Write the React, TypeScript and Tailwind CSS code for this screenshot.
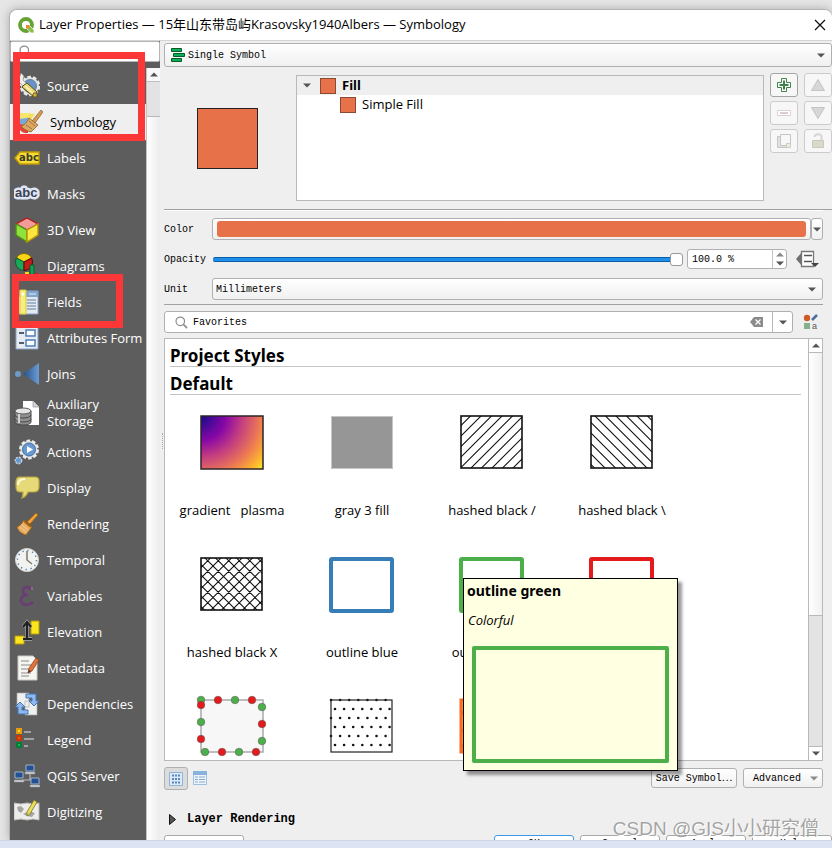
import React from "react";
import type { ReactNode } from "react";

const MONO = "font-['Liberation_Mono','Noto_Sans_CJK_SC',monospace]";
const BOLD = "font-['Noto_Sans',sans-serif] font-bold";
const BTN = "rounded-[3px] border border-[#b0b0b0] bg-linear-to-b from-white to-[#f0f0f0]";

/* ---------- small glyphs ---------- */

function Arrow({ up = false, pale = false }: { up?: boolean; pale?: boolean }) {
  return (
    <svg width="8" height="5" viewBox="0 0 8 5" aria-hidden="true">
      <path d={up ? "M0 4.5h8L4 .5z" : "M0 .5h8L4 4.5z"} fill={pale ? "#8a8a8a" : "#555"} />
    </svg>
  );
}

function Magnifier() {
  return (
    <svg width="13" height="13" viewBox="0 0 14 14" fill="none" stroke="#8c8c8c" strokeWidth="1.3" aria-hidden="true">
      <circle cx="5.7" cy="5.7" r="4.6" />
      <path d="M9 9l4 4" strokeWidth="1.8" />
    </svg>
  );
}

function Icon({ children }: { children: ReactNode }) {
  return (
    <svg width="26" height="26" viewBox="0 0 26 26" className="shrink-0" aria-hidden="true">
      {children}
    </svg>
  );
}

const iconSource = (
  <Icon>
    <circle cx="16" cy="13" r="9" fill="#dcdcd8" stroke="#e9e9e6" strokeWidth="2.500" strokeDasharray="3.500 2.150" />
    <circle cx="16" cy="13" r="6.500" fill="#6a93c4" stroke="#4d759f" strokeWidth=".8" />
    <path d="M3 2l3 1 1-3 3 3-1 4 7 7-3 3-7-7-4-1-2-4 3 1z" fill="#ecece8" stroke="#888" strokeWidth=".7" />
    <path d="M10 12l3-2 10 9-3 5-12-10z" fill="#e9d77b" stroke="#5e4d13" />
    <path d="M11 13l9 8" stroke="#fff4b5" strokeWidth="1.600" />
    <circle cx="21" cy="22" r="2.200" fill="#d4b343" stroke="#5e4d13" strokeWidth=".9" />
  </Icon>
);
const iconSymbology = (
  <Icon>
    <path d="M3 10c1-4 6-6 15-5l-6 8-9 2z" fill="#f5de5a" />
    <path d="M2 9l8-2 3 7-10 3z" fill="#78a7dc" />
    <path d="M3 4l11 0-4 5-8 1z" fill="#f8e66c" />
    <path d="M1 15l10 1v8c-5 1-10-3-10-9z" fill="#e8413c" />
    <path d="M24 1l2 2-8 11-3-2z" fill="#d69a50" stroke="#8d5e26" strokeWidth=".7" />
    <path d="M12 9l9 7-7 7c-4-1-8-3-10-6 3 0 6-4 8-8z" fill="#dba964" stroke="#8d5e26" strokeWidth=".8" />
    <path d="M9 16l6 4M12 12l6 5" stroke="#8d5e26" strokeWidth=".7" />
  </Icon>
);
const iconLabels = (
  <Icon>
    <path d="M1 13l5-6h19v12H6z" fill="#f7dc33" stroke="#c09a08" strokeWidth="1.400" />
    <text x="5" y="16" fontSize="10" fontWeight="700" fontFamily="DejaVu Sans, sans-serif" fill="#3a3a2a">abc</text>
  </Icon>
);
const iconMasks = (
  <Icon>
    <text x="1" y="16" fontSize="13" fontWeight="700" fontFamily="Liberation Sans, sans-serif" fill="#3b4250" stroke="#dfe6f7" strokeWidth="5" strokeLinejoin="round" paintOrder="stroke">abc</text>
  </Icon>
);
const icon3d = (
  <Icon>
    <path d="M13 1l11 6-11 6L2 7z" fill="#f19b9b" stroke="#b71818" strokeWidth="1.400" />
    <path d="M2 7l11 6v12L2 18z" fill="#8fe23e" stroke="#4c8f12" strokeWidth="1.400" />
    <path d="M24 7l-11 6v12l11-7z" fill="#fbe63f" stroke="#b39508" strokeWidth="1.400" />
  </Icon>
);
const iconDiagrams = (
  <Icon>
    <path d="M10 9L2.500 5A8.500 8.500 0 0 1 17.500 5z" fill="#fbd414" stroke="#8c6b00" />
    <path d="M10 9L2.500 5A8.500 8.500 0 0 0 10 17.500z" fill="#1aa85a" stroke="#065f2c" />
    <path d="M10 9l7.500-4A8.500 8.500 0 0 1 10 17.500z" fill="#c51b1b" stroke="#560606" />
    <path d="M16 12h4v14h-4z" fill="#11a352" stroke="#065f2c" />
    <path d="M11 19h4v7h-4z" fill="#fbd414" /><path d="M21 20h3v6h-3z" fill="#c51b1b" />
  </Icon>
);
const iconFields = (
  <Icon>
    <path d="M3 2h21v23H3z" fill="#e6e9ed" stroke="#87a6cb" />
    <path d="M3 2h21v6H3z" fill="#7fa5d2" /><path d="M15 5h7" stroke="#e6eefa" />
    <path d="M13 11h9M13 14h9M13 17h9M13 20h9" stroke="#5c80aa" strokeWidth="1.200" />
    <path d="M6 1h6v24H6z" fill="#f5ee83" stroke="#d9c92b" /><circle cx="9" cy="5" r="1.500" fill="#fff" />
  </Icon>
);
const iconForm = (
  <Icon>
    <path d="M2 2h22v22H2z" fill="#e8ecf2" stroke="#86a5c8" />
    <path d="M12 5h9v6h-9zM12 15h9v6h-9z" fill="#fff" stroke="#4e7db5" strokeWidth="1.500" />
    <path d="M5 8h5M5 18h5" stroke="#555d68" strokeWidth="1.800" />
  </Icon>
);
const iconJoins = (
  <Icon>
    <defs><linearGradient id="join"><stop offset="0" stopColor="#234f84" /><stop offset="1" stopColor="#6d9cd5" /></linearGradient></defs>
    <circle cx="4" cy="13" r="3" fill="#6d9ac8" /><path d="M9 13L25 2v22z" fill="url(#join)" />
  </Icon>
);
const iconStorage = (
  <Icon>
    <path d="M9 1h10l6 6v18H9z" fill="#fff" /><path d="M19 1v6h6" fill="#d4d4d4" stroke="#999" strokeWidth=".7" />
    <path d="M1 11v11c0 4 16 4 16 0V11z" fill="#8f8f8f" stroke="#4a4a4a" />
    <ellipse cx="9" cy="11" rx="8" ry="3" fill="#e5e5e5" stroke="#5a5a5a" />
    <path d="M1 15c0 4 16 4 16 0M1 19c0 4 16 4 16 0" fill="none" stroke="#4a4a4a" />
    <path d="M5 14v9" stroke="#d4d4d4" strokeWidth="2" />
  </Icon>
);
const iconActions = (
  <Icon>
    <circle cx="15" cy="10.500" r="8.500" fill="#dedfe0" stroke="#e9eaea" strokeWidth="3" strokeDasharray="3.500 1.840" />
    <circle cx="15" cy="10.500" r="6.500" fill="#6899d2" stroke="#406c9f" />
    <path d="M13 7l6 3.500-6 3.500z" fill="#fff" />
    <circle cx="4.500" cy="21.500" r="3.200" fill="#6899d2" stroke="#c9d4e1" strokeWidth="1.400" strokeDasharray="2 1" />
  </Icon>
);
const iconDisplay = (
  <Icon>
    <path d="M6 2h15c3 0 4 2 4 4v6c0 4-2 5-5 5h-6c-1 3-3 5-6 6 1-2 1-4 1-6H6c-3 0-4-2-4-5V7c0-3 1-5 4-5z" fill="#e5da77" stroke="#b9a642" strokeWidth="1.200" />
    <path d="M4 10c0-4 2-6 7-6" fill="none" stroke="#fffbe0" strokeWidth="2" />
  </Icon>
);
const iconRendering = (
  <Icon>
    <path d="M22 2l2 2-8 9-3-2z" fill="#f0a13a" stroke="#a15f10" strokeWidth=".8" />
    <path d="M10 9l8 7-6 8C8 23 4 20 3 16c3-1 5-4 7-7z" fill="#e6ad65" stroke="#a15f10" strokeWidth=".9" />
    <path d="M10 10l7 6" stroke="#a15f10" strokeWidth="2" /><path d="M6 16l6 5M8 14l6 5" stroke="#fbd6a0" strokeWidth=".8" />
  </Icon>
);
const iconTemporal = (
  <Icon>
    <circle cx="13" cy="13" r="11.500" fill="#f2f2ee" stroke="#d4d4d0" />
    <circle cx="13" cy="13" r="9.500" fill="none" stroke="#4b81c0" strokeWidth="1.500" strokeDasharray="1.300 3.674" />
    <path d="M13 4v9l5 4" fill="none" stroke="#777" strokeWidth="1.500" />
  </Icon>
);
const iconVariables = (
  <Icon>
    <path d="M18 7c-2-4-9-4-9 1 0 3 2 4 5 4-4 0-7 2-7 5 0 6 8 6 12 2" fill="none" stroke="#6a3d75" strokeWidth="2.600" />
    <path d="M18 4v3" stroke="#8e6699" strokeWidth="2" />
  </Icon>
);
const iconElevation = (
  <Icon>
    <path d="M17 2h8v13h-8z" fill="#fbe51f" stroke="#b79c07" /><path d="M1 17h9v8H1z" fill="#fbe51f" stroke="#b79c07" />
    <path d="M9 20h9M13 4v15M9 8l4-5 4 5" fill="none" stroke="#a8a8a8" strokeWidth="3.500" />
    <path d="M9 20h9M13 4v15M9 8l4-5 4 5" fill="none" stroke="#222" strokeWidth="2.200" />
  </Icon>
);
const iconMetadata = (
  <Icon>
    <path d="M4 1h15l4 4v20H4z" fill="#f5f5f2" stroke="#c9c9c5" />
    <path d="M7 6h8M7 10h10M7 14h8M7 18h10M7 21h8" stroke="#8a8a8a" strokeWidth="1.200" />
    <path d="M22 3l3 2-7 11-4 2 1-5z" fill="#df7139" stroke="#8d3a12" strokeWidth=".7" /><path d="M14 18l1-3 2 1z" fill="#333" />
  </Icon>
);
const iconDependencies = (
  <Icon>
    <path d="M3 2h12v14H3zM11 10h12v14H11z" fill="#f0f0ee" stroke="#aaa" strokeWidth=".7" />
    <path d="M12 3h10v7h3l-5 5-5-5h3V7h-6z" fill="#8fb9ee" stroke="#4376b9" />
    <path d="M14 23H4v-7H1l5-5 5 5H8v3h6z" fill="#8fb9ee" stroke="#4376b9" />
  </Icon>
);
const iconLegend = (
  <Icon>
    <path d="M3 2h4v4H3z" fill="#fbdc22" stroke="#e39b0b" strokeWidth="2" />
    <path d="M3 9h4v4H3z" fill="#f2531d" stroke="#c53a09" strokeWidth="2" />
    <path d="M3 16h4v4H3z" fill="#15ba5b" stroke="#087c37" strokeWidth="2" />
    <path d="M10 5h7M10 12h10M10 19h4" stroke="#a2a2a2" strokeWidth="2" />
  </Icon>
);
const iconServer = (
  <Icon>
    <path d="M16 11v6M8 17h12" fill="none" stroke="#bbb" strokeWidth="1.200" />
    <g fill="#234f93" stroke="#a0b4ca"><path d="M12 2h8v6h-8zM1 9h8v6H1zM17 15h8v6h-8z" /></g>
    <g fill="#d9dbde" stroke="#858b92" strokeWidth=".6"><path d="M11 9h10v2H11zM0 17h10v2H0zM16 22h10v2H16z" /></g>
  </Icon>
);
const iconDigitizing = (
  <Icon>
    <path d="M0 4l7 1 6-1 6 1 6-1v17l-6-1-6 1-6-1-7 1z" fill="#ededeb" stroke="#bdbdbd" />
    <path d="M3 8l4-1 3 3-3 4-3-2zM9 15l6-3 6 2-3 4-5-1zM4 16l3 2" fill="#a5a5a3" />
    <path d="M20 1l3 2-7 12-3 2v-4z" fill="#eadf58" stroke="#79702a" strokeWidth=".8" />
  </Icon>
);

const NAV: { label: string; icon: ReactNode; active?: boolean; tall?: boolean }[] = [
  { label: "Source", icon: iconSource },
  { label: "Symbology", icon: iconSymbology, active: true },
  { label: "Labels", icon: iconLabels },
  { label: "Masks", icon: iconMasks },
  { label: "3D View", icon: icon3d },
  { label: "Diagrams", icon: iconDiagrams },
  { label: "Fields", icon: iconFields },
  { label: "Attributes Form", icon: iconForm },
  { label: "Joins", icon: iconJoins },
  { label: "Auxiliary Storage", icon: iconStorage, tall: true },
  { label: "Actions", icon: iconActions },
  { label: "Display", icon: iconDisplay },
  { label: "Rendering", icon: iconRendering },
  { label: "Temporal", icon: iconTemporal },
  { label: "Variables", icon: iconVariables },
  { label: "Elevation", icon: iconElevation },
  { label: "Metadata", icon: iconMetadata },
  { label: "Dependencies", icon: iconDependencies },
  { label: "Legend", icon: iconLegend },
  { label: "QGIS Server", icon: iconServer },
  { label: "Digitizing", icon: iconDigitizing },
];

function Sidebar() {
  return (
    <aside className="flex w-[150px] shrink-0 flex-col bg-[#5d5d5d]">
      <label className="flex h-[21px] shrink-0 items-start rounded-[2px] border border-[#b5b5b5] bg-white pt-[3px] pl-2">
        <Magnifier />
        <input aria-label="Search settings" className="ml-1 h-3 w-24 bg-transparent text-[12px] outline-none" />
      </label>
      <div className="mt-[6px] flex min-h-0 flex-1">
        <nav className="min-w-0 flex-1 overflow-hidden border-r border-[#c4c4c4]">
          {NAV.map((n) => (
            <button
              key={n.label}
              className={`flex w-full items-center gap-[7px] text-left text-[13px] leading-[17px] ${n.tall ? "h-[42px]" : "h-9"} ${
                n.active ? "bg-[#efefef] pl-[7px] text-black" : "pl-1 text-white"
              }`}
            >
              {n.icon}
              <span className={n.tall ? "w-16" : "whitespace-nowrap"}>{n.label}</span>
            </button>
          ))}
        </nav>
        <div className="flex w-[13px] flex-col bg-linear-to-r from-white to-[#ececec]">
          <button aria-label="Scroll up" className="flex h-[14px] items-center justify-center border-b border-[#c0c0c0] bg-[#f8f8f8]">
            <Arrow up />
          </button>
          <div className="h-[35px] border-b border-[#b8b8b8] bg-[#e3e3e3]" />
        </div>
      </div>
    </aside>
  );
}

/* ---------- symbol layer tree ---------- */

function ToolButton({ label, enabled, children }: { label: string; enabled?: boolean; children: ReactNode }) {
  return (
    <button
      aria-label={label}
      className={`flex h-6 w-7 items-center justify-center rounded-[3px] border bg-[#f7f7f7] ${enabled ? "border-[#a5a5a5]" : "border-[#cccccc]"}`}
    >
      <svg width="16" height="16" viewBox="0 0 16 16" aria-hidden="true">{children}</svg>
    </button>
  );
}

function SymbolSection() {
  return (
    <section className="flex h-[143px] shrink-0 border-b border-[#a0a0a0] pt-[6px]">
      <div className="flex w-[132px] shrink-0 items-center justify-center pr-[6px] pb-[5px]">
        <div className="size-[61px] border border-[#232323] bg-[#e77148]" />
      </div>
      <div className="mt-[2px] mb-2 min-w-0 flex-1 border border-[#b9b9b9] bg-white text-[13px] leading-[19px]">
        <div className="flex h-[19px] items-center bg-[#efefef] pl-[6px]">
          <Arrow />
          <span className="mr-[6px] ml-[9px] size-4 border border-[#8c4a33] bg-[#e77148]" />
          <b className={BOLD}>Fill</b>
        </div>
        <div className="flex h-[19px] items-center pl-[43px]">
          <span className="mr-[6px] size-4 border border-[#8c4a33] bg-[#e77148]" />
          Simple Fill
        </div>
      </div>
      <div className="ml-[6px] grid shrink-0 auto-rows-min grid-cols-2 gap-x-[6px] gap-y-1">
        <ToolButton label="Add symbol layer" enabled>
          <path d="M5.500 1.500h5v4h4v5h-4v4h-5v-4h-4v-5h4z" fill="#fff" stroke="#3d8447" />
          <path d="M8 3.500v9M3.500 8h9" stroke="#3d8447" strokeWidth="2" />
        </ToolButton>
        <ToolButton label="Move up"><path d="M8 2.500l6.500 11h-13z" fill="#d5d7d9" stroke="#c2c4c7" /></ToolButton>
        <ToolButton label="Remove symbol layer">
          <path d="M1.500 5.500h13v5h-13z" fill="#fff" stroke="#dfd1d1" /><path d="M4 8h8" stroke="#e3cccc" strokeWidth="2" />
        </ToolButton>
        <ToolButton label="Move down"><path d="M8 13.500l6.500-11h-13z" fill="#d5d7d9" stroke="#c2c4c7" /></ToolButton>
        <ToolButton label="Duplicate symbol layer">
          <path d="M1.500 3.500h9v11h-9z" fill="#e2e2e2" stroke="#c6c6c6" /><path d="M4.500 1.500h10v11h-10z" fill="#f7f7f7" stroke="#c6c6c6" />
          <path d="M10.500 10.500h4v4h-4z" fill="#eeece0" stroke="#ceccbe" />
        </ToolButton>
        <ToolButton label="Lock symbol colour">
          <path d="M4.500 4C5 0 12 .5 11.500 4v4" fill="none" stroke="#d6d6d6" strokeWidth="2" />
          <path d="M2.500 7.500h11v7h-11z" fill="#dad9cb" stroke="#c9c8ba" />
        </ToolButton>
      </div>
    </section>
  );
}

function FormSection() {
  return (
    <section className={`mr-[9px] shrink-0 border-t border-b border-t-white border-b-[#a0a0a0] pt-[7px] pb-1 text-[10px] ${MONO}`}>
      <div className="flex h-[22px] items-center">
        <label htmlFor="color" className="w-12 shrink-0">Color</label>
        <button id="color" className={`flex h-[22px] min-w-0 flex-1 px-1 py-[2px] ${BTN}`}>
          <span className="h-full w-full rounded-[3px] bg-[#e77148]" />
        </button>
        <button aria-label="Color options" className={`flex h-[22px] w-3 items-center justify-center ${BTN}`}><Arrow /></button>
      </div>
      <div className="mt-2 flex h-[22px] items-center">
        <label htmlFor="opacity" className="w-[49px] shrink-0">Opacity</label>
        <input
          id="opacity"
          type="range"
          defaultValue={100}
          className="h-[14px] min-w-0 flex-1 appearance-none bg-transparent [&::-webkit-slider-runnable-track]:h-[5px] [&::-webkit-slider-runnable-track]:rounded-[2px] [&::-webkit-slider-runnable-track]:border-y [&::-webkit-slider-runnable-track]:border-[#0a5ea8] [&::-webkit-slider-runnable-track]:bg-[#1d8feb] [&::-webkit-slider-thumb]:-mt-[5px] [&::-webkit-slider-thumb]:size-[13px] [&::-webkit-slider-thumb]:appearance-none [&::-webkit-slider-thumb]:rounded-[3px] [&::-webkit-slider-thumb]:border [&::-webkit-slider-thumb]:border-[#999] [&::-webkit-slider-thumb]:bg-white"
        />
        <div className="ml-1 flex h-5 w-[100px] rounded-[3px] border border-[#b0b0b0] bg-white">
          <input aria-label="Opacity value" defaultValue="100.0 %" className="min-w-0 flex-1 pl-1 outline-none" />
          <div className="flex w-[14px] flex-col border-l border-[#c4c4c4]">
            <button aria-label="Increase" className="flex flex-1 items-center justify-center"><Arrow up pale /></button>
            <button aria-label="Decrease" className="flex flex-1 items-center justify-center"><Arrow /></button>
          </div>
        </div>
        <button aria-label="Data defined override" className="mr-[3px] ml-[9px]">
          <svg width="24" height="18" viewBox="0 0 24 18" aria-hidden="true">
            <path d="M6 2v14L0 9z" fill="#707070" /><path d="M5.500 1.500h12v15h-12z" fill="#fff" stroke="#777" strokeWidth="1.300" />
            <path d="M8 5.500h8M8 11.500h8" stroke="#555" strokeWidth="1.600" /><path d="M15 13h8l-4 4z" fill="#444" />
          </svg>
        </button>
      </div>
      <div className="mt-2 flex h-[22px] items-center">
        <label htmlFor="unit" className="w-12 shrink-0">Unit</label>
        <div className="relative min-w-0 flex-1">
          <select id="unit" className={`block h-[22px] w-full appearance-none pl-[3px] ${BTN}`}>
            <option>Millimeters</option>
          </select>
          <span className="pointer-events-none absolute inset-y-0 right-[7px] flex items-center"><Arrow /></span>
        </div>
      </div>
    </section>
  );
}

/* ---------- style library ---------- */

function Frame({ color }: { color: string }) {
  return <rect x="2" y="2" width="61" height="52" rx="1" fill="none" stroke={color} strokeWidth="4" />;
}

const offsets = Array.from({ length: 13 }, (_, i) => i);
const slash = offsets.map((i) => `M${i * 10.5 - 52} 54l54-54`).join("");
const back = offsets.map((i) => `M${i * 10.5 - 58} 0l54 54`).join("");
const spots: [number, number, number][] = [
  [1, 1, 0], [1, 6, 1], [18, 1, 1], [35, 1, 0], [52, 1, 1], [62, 8, 0], [62, 25, 1], [62, 42, 0],
  [1, 23, 0], [1, 40, 1], [5, 53, 0], [22, 53, 1], [39, 53, 0], [56, 53, 1],
];

function Hatch({ d }: { d: string }) {
  return (
    <>
      <path d={d} clipPath="url(#box)" stroke="#111" strokeWidth="1.100" />
      <rect x="2" y="1" width="61" height="52" fill="none" stroke="#111" strokeWidth="1.600" />
    </>
  );
}

const STYLES: { id: string; caption?: string; art: ReactNode }[] = [
  {
    id: "plasma",
    caption: "gradient\u00a0\u00a0 plasma",
    art: (
      <>
        <defs>
          <radialGradient id="plasma" gradientUnits="userSpaceOnUse" cx="2" cy="1" r="82">
            <stop offset="0" stopColor="#160a8a" /><stop offset=".3" stopColor="#8707a6" /><stop offset=".5" stopColor="#c33d80" />
            <stop offset=".72" stopColor="#ed7953" /><stop offset=".88" stopColor="#fdb32f" /><stop offset="1" stopColor="#f4ee27" />
          </radialGradient>
        </defs>
        <rect x="2" y="1" width="62" height="53" fill="url(#plasma)" stroke="#2c2328" strokeWidth="1.500" />
      </>
    ),
  },
  { id: "gray", caption: "gray 3 fill", art: <rect x="2.500" y="1.500" width="61" height="52" fill="#969696" stroke="#c6c6c6" /> },
  { id: "slash", caption: "hashed black /", art: <Hatch d={slash} /> },
  { id: "back", caption: "hashed black \\", art: <Hatch d={back} /> },
  { id: "cross", caption: "hashed black X", art: <Hatch d={slash + back} /> },
  { id: "blue", caption: "outline blue", art: <Frame color="#377eb8" /> },
  { id: "green", caption: "outline green", art: <Frame color="#4daf4a" /> },
  { id: "red", caption: "outline red", art: <Frame color="#e41a1c" /> },
  {
    id: "beads",
    art: (
      <>
        <rect x="2" y="1" width="62" height="52" fill="#f7f7f7" stroke="#aaa" strokeWidth="1.500" />
        {spots.map(([x, y, red]) => (
          <circle key={`${x}-${y}`} cx={x + 1} cy={y} r="3.800" fill={red ? "#e41a1c" : "#4daf4a"} stroke="#555" strokeWidth=".5" />
        ))}
      </>
    ),
  },
  {
    id: "dots",
    art: (
      <>
        {[1, 10, 19, 28, 37, 46].flatMap((y, r) =>
          [0, 1, 2, 3, 4, 5, 6].map((c) => <circle key={`${r}-${c}`} cx={(r % 2 ? 6 : 2) + c * 9.1} cy={y} r="1.300" fill="#111" />)
        )}
        <rect x="2" y="1" width="61" height="52" fill="none" stroke="#222" strokeWidth="1.200" />
      </>
    ),
  },
  {
    id: "orange",
    art: (
      <>
        <rect x="2" y="1" width="62" height="52" fill="#fdae61" stroke="#fc6a1b" strokeWidth="3" />
        <path d="M1 14h63M1 32h63M1 47h63" stroke="#fc6a1b" strokeWidth="4" />
      </>
    ),
  },
];

function StyleList() {
  const heading = `mr-[7px] ml-[5px] h-7 border-b border-[#c4c4c4] pt-[5px] text-[17px] leading-6 ${BOLD}`;
  return (
    <div className="mt-[5px] mr-[9px] flex min-h-0 flex-1 border border-[#b9b9b9] bg-white">
      <div className="min-w-0 flex-1 overflow-hidden">
        <h2 className={heading}>Project Styles</h2>
        <h2 className={heading}>Default</h2>
        <svg width="0" height="0" className="absolute" aria-hidden="true">
          <clipPath id="box"><rect x="2" y="1" width="61" height="52" /></clipPath>
        </svg>
        <div className="grid grid-cols-[repeat(auto-fill,130px)] pl-[2px]">
          {STYLES.map((s) => (
            <button key={s.id} aria-label={s.caption ?? s.id} className="flex h-[142px] flex-col items-center pt-5 text-[13px] leading-5">
              <svg width="66" height="57" viewBox="0 0 66 57" className="overflow-visible" aria-hidden="true">{s.art}</svg>
              {s.caption && <span className="mt-7 whitespace-nowrap">{s.caption}</span>}
            </button>
          ))}
        </div>
      </div>
      <div className="flex w-[14px] shrink-0 flex-col border-l border-[#b9b9b9] bg-[#e3e3e3]">
        <button aria-label="Scroll list up" className="flex h-[14px] items-center justify-center border-b border-[#b9b9b9] bg-white"><Arrow up /></button>
        <div className="h-[263px] border-b border-[#b9b9b9] bg-linear-to-r from-white to-[#f0f0f0]" />
        <div className="flex-1" />
        <button aria-label="Scroll list down" className="flex h-[14px] items-center justify-center border-t border-[#b9b9b9] bg-white"><Arrow /></button>
      </div>
    </div>
  );
}

function LibrarySearch() {
  return (
    <div className={`mt-[6px] mr-[9px] flex h-[22px] shrink-0 items-center text-[10px] ${MONO}`}>
      <div className="flex h-full min-w-0 flex-1 items-center rounded-[3px] border border-[#b0b0b0] bg-white pl-[10px]">
        <Magnifier />
        <input aria-label="Filter symbols" defaultValue="Favorites" className="ml-[5px] min-w-0 flex-1 outline-none" />
        <button aria-label="Clear" className="mr-2">
          <svg width="14" height="10" viewBox="0 0 14 10" aria-hidden="true">
            <path d="M4 0h9v10H4L0 5z" fill="#8b8b8b" /><path d="M5.500 2.500l5 5M10.500 2.500l-5 5" stroke="#fff" strokeWidth="1.200" />
          </svg>
        </button>
        <button aria-label="Choose group" className="flex h-full w-5 items-center justify-center border-l border-[#b9b9b9]"><Arrow /></button>
      </div>
      <button aria-label="Style manager" className="ml-[10px] w-5">
        <svg width="16" height="16" viewBox="0 0 16 16" aria-hidden="true">
          <circle cx="4" cy="4" r="3.200" fill="#cf5a28" /><path d="M9 6l5-5" stroke="#4c6e9e" strokeWidth="2.500" />
          <path d="M1 9h6v6H1z" fill="#86b08c" />
          <text x="9" y="15" fontSize="9" fontFamily="Liberation Sans, sans-serif" fill="#555">a</text>
        </svg>
      </button>
    </div>
  );
}

function BottomBar() {
  return (
    <div className={`mr-[9px] flex h-[50px] shrink-0 items-start text-[10px] ${MONO}`}>
      <button aria-label="Icon view" className="mt-[6px] flex h-[23px] w-6 items-center justify-center rounded-[3px] border border-[#b0b0b0] bg-[#dcdcdc]">
        <svg width="14" height="14" viewBox="0 0 14 14" aria-hidden="true">
          <path d="M.5.500h13v13H.5z" fill="#dce9f7" stroke="#8fb4dc" />
          <path d="M3 3.500h8M3 7h8M3 10.500h8" stroke="#5688bf" strokeWidth="2" strokeDasharray="2 1" />
        </svg>
      </button>
      <button aria-label="List view" className="mt-[10px] ml-[5px]">
        <svg width="14" height="14" viewBox="0 0 14 14" aria-hidden="true">
          <path d="M.5.500h13v13H.5z" fill="#eef4fb" stroke="#9dbfe0" /><path d="M0 0h14v4H0z" fill="#87b2dc" />
          <path d="M2 6h3M6 6h6M2 8.500h3M6 8.500h6M2 11h3M6 11h6" stroke="#86a9cc" />
        </svg>
      </button>
      <div className="flex-1" />
      <button className={`mt-[7px] h-5 w-[86px] whitespace-nowrap ${BTN}`}>Save Symbol⋯</button>
      <button className={`mt-[7px] ml-[6px] flex h-5 w-20 items-center justify-between pr-1 pl-[9px] ${BTN}`}>
        Advanced <Arrow pale />
      </button>
    </div>
  );
}

export default function App() {
  const dialogButton = "flex h-6 w-20 justify-center rounded-[3px] border bg-white pt-[2px]";
  return (
    <div className="relative flex h-screen flex-col overflow-hidden bg-[#e6e6e6] font-['Open_Sans','Noto_Sans_CJK_SC',sans-serif] text-black">
      <div className="mt-[9px] ml-[9px] flex min-h-0 flex-1 flex-col overflow-hidden rounded-t-lg border-t border-l border-[#b4b4b4] bg-[#efefef] shadow-[0_0_10px_#aaa]">
        <header className="flex h-[30px] shrink-0 items-center bg-white pr-[6px] pl-2">
          <svg width="17" height="17" viewBox="0 0 17 17" aria-hidden="true">
            <circle cx="8" cy="8" r="6" fill="none" stroke="#67a334" strokeWidth="3.800" />
            <path d="M8 8h3l5 5v3h-3l-5-5z" fill="#8fbe4e" stroke="#fff" strokeWidth=".7" /><path d="M8 8h3l1 1-3 3-1-1z" fill="#f0892c" />
          </svg>
          <h1 className="ml-1 flex-1 text-[13px]">Layer Properties — 15年山东带岛屿Krasovsky1940Albers — Symbology</h1>
          <button aria-label="Close">
            <svg width="12" height="12" viewBox="0 0 12 12" stroke="#111" strokeWidth="1.300" aria-hidden="true"><path d="M1 1l10 10M11 1L1 11" /></svg>
          </button>
        </header>
        <div className="flex min-h-0 flex-1 border-t border-[#d4d4d4]">
          <Sidebar />
          <div className="flex w-1 shrink-0 items-center justify-center">
            <div className="h-4 border-l border-dotted border-[#aaa]" />
          </div>
          <main className="flex min-w-0 flex-1 flex-col">
            <div className={`relative mt-[2px] shrink-0 text-[10px] ${MONO}`}>
              <select aria-label="Renderer" className={`block h-6 w-full appearance-none pl-[23px] ${BTN}`}>
                <option>Single Symbol</option>
              </select>
              <svg width="14" height="14" viewBox="0 0 14 14" className="pointer-events-none absolute top-[5px] left-[7px]" aria-hidden="true">
                <g fill="#0fae56" stroke="#075c2b"><path d="M.5.500h10v3H.5zM2.500 5.500h11v3h-11zM.5 10.500h10v3H.5z" /></g>
              </svg>
              <span className="pointer-events-none absolute inset-y-0 right-[7px] flex items-center"><Arrow /></span>
            </div>
            <SymbolSection />
            <FormSection />
            <LibrarySearch />
            <StyleList />
            <BottomBar />
            <details className={`h-6 shrink-0 text-[12px] leading-4 font-bold ${MONO}`}>
              <summary className="flex list-none items-center gap-[11px] pl-[5px]">
                <svg width="7" height="11" viewBox="0 0 7 11" aria-hidden="true"><path d="M.5.500l6 5-6 5z" fill="#555" stroke="#111" /></svg>
                Layer Rendering
              </summary>
            </details>
            <footer className={`flex h-[5px] shrink-0 gap-[6px] overflow-hidden text-[10px] leading-3 ${MONO}`}>
              <button aria-label="Style" className="h-6 w-20 rounded-[3px] border border-[#a8a8a8] bg-white" />
              <div className="flex-1" />
              <button className={`border-[#3b9ae8] ${dialogButton}`}>OK</button>
              <button className={`border-[#a8a8a8] ${dialogButton}`}>Cancel</button>
              <button className={`border-[#a8a8a8] ${dialogButton}`}>Apply</button>
              <button className={`border-[#a8a8a8] ${dialogButton}`}>Help</button>
            </footer>
          </main>
        </div>
      </div>
      <div className="h-2 shrink-0 border-t border-[#cdd5e2] bg-[#dde5f5]" />

      {/* tooltip of the hovered style */}
      <div role="tooltip" className="absolute top-[578px] left-[463px] flex h-[193px] w-[215px] flex-col border border-black bg-[#ffffe1] shadow-[4px_4px_3px_#0006]">
        <b className={`mt-[2px] ml-[3px] text-[14px] leading-5 ${BOLD}`}>outline green</b>
        <i className="mt-[9px] ml-1 text-[13px] leading-5">Colorful</i>
        <div className="mx-2 mt-4 mb-[7px] flex-1 rounded-[2px] border-4 border-[#4daf4a]" />
      </div>

      {/* highlight marks */}
      <div className="pointer-events-none absolute top-[52px] left-[13px] h-[89px] w-[132px] border-[7px] border-[#fb3737]" />
      <div className="pointer-events-none absolute top-[274px] left-[12px] h-[54px] w-[111px] border-[7px] border-[#fb3737]" />

      <p className="pointer-events-none absolute right-[13px] bottom-[5px] font-['Liberation_Sans','Noto_Sans_CJK_SC',sans-serif] text-[19px] leading-7 whitespace-nowrap text-[#8e8e8ecc] [text-shadow:1px_1px_0_#fff]">
        CSDN @GIS小小研究僧
      </p>
    </div>
  );
}
